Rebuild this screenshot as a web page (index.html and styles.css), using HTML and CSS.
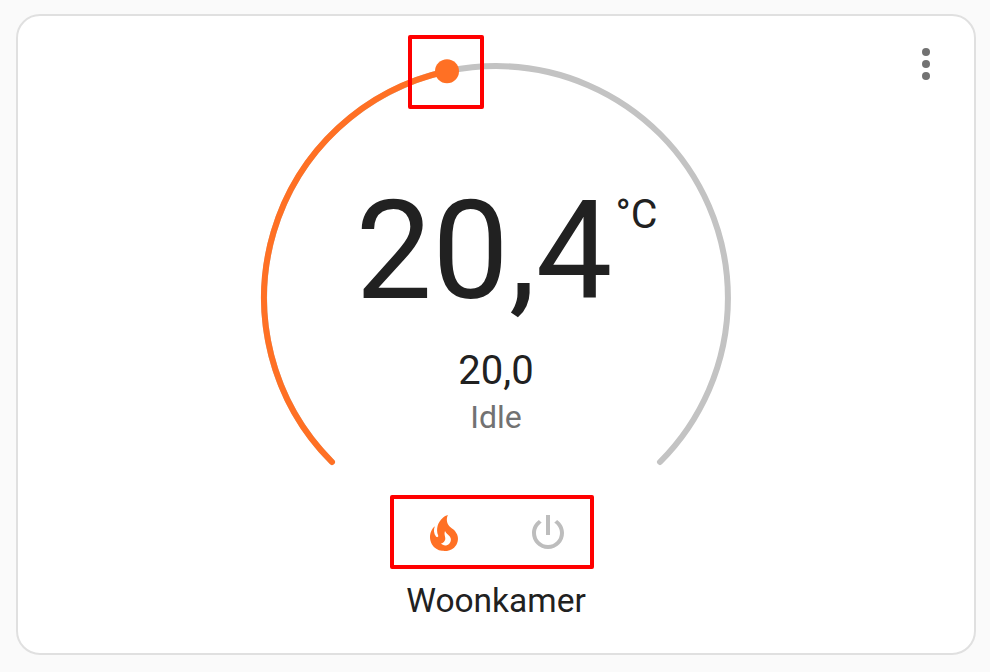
FILE: index.html
```html
<!DOCTYPE html>
<html lang="nl">
<head>
<meta charset="utf-8">
<title>Woonkamer</title>
<link rel="stylesheet" href="styles.css">
</head>
<body>
<main class="card">
  <button class="menu" aria-label="Menu">
    <svg class="icon" viewBox="0 0 24 24"><circle cx="12" cy="6" r="2"/><circle cx="12" cy="12" r="2"/><circle cx="12" cy="18" r="2"/></svg>
  </button>
  <section class="gauge">
    <svg class="dial" viewBox="-238 -238 476 412">
      <path class="track" d="M-164 164A232 232 0 1 1 164 164"/>
      <path class="value" d="M-164 164A232 232 0 0 1 -49 -226.8"/>
      <circle class="handle" cx="-49" cy="-226.8" r="12"/>
    </svg>
    <div class="readout">
      <div class="current"><span>20,4</span><span class="unit">°C</span></div>
      <div class="target">20,0</div>
      <div class="action">Idle</div>
    </div>
    <div class="mark mark-handle"></div>
  </section>
  <div class="modes">
    <svg class="icon heat" viewBox="0 0 24 24"><path d="M17.66 11.2C17.43 10.9 17.15 10.64 16.89 10.38C16.22 9.78 15.46 9.35 14.82 8.72C13.33 7.26 13 4.85 13.95 3C13 3.23 12.17 3.75 11.46 4.32C8.87 6.4 7.85 10.07 9.07 13.22C9.11 13.32 9.15 13.42 9.15 13.55C9.15 13.77 9 13.97 8.8 14.05C8.57 14.15 8.33 14.09 8.14 13.93C8.08 13.88 8.04 13.83 8 13.76C6.87 12.33 6.69 10.28 7.45 8.64C5.78 10 4.87 12.3 5 14.47C5.06 14.97 5.12 15.47 5.29 15.97C5.43 16.57 5.7 17.17 6 17.7C7.08 19.43 8.95 20.67 10.96 20.92C13.1 21.19 15.39 20.8 17.03 19.32C18.86 17.66 19.5 15 18.56 12.72L18.43 12.46C18.22 12 17.66 11.2 17.66 11.2M14.5 17.5C14.22 17.74 13.76 18 13.4 18.1C12.28 18.5 11.16 17.94 10.5 17.28C11.69 17 12.4 16.12 12.61 15.23C12.78 14.43 12.46 13.77 12.33 13C12.21 12.26 12.23 11.63 12.5 10.94C12.69 11.32 12.89 11.7 13.13 12C13.9 13 15.11 13.44 15.37 14.8C15.41 14.94 15.43 15.08 15.43 15.23C15.46 16.05 15.1 16.95 14.5 17.5Z"/></svg>
    <svg class="icon off" viewBox="0 0 24 24"><path d="M16.56 5.44L15.11 6.89C16.84 7.94 18 9.83 18 12A6 6 0 0 1 12 18A6 6 0 0 1 6 12C6 9.83 7.16 7.94 8.88 6.88L7.44 5.44C5.36 6.88 4 9.28 4 12A8 8 0 0 0 12 20A8 8 0 0 0 20 12C20 9.28 18.64 6.88 16.56 5.44M13 3H11V13H13"/></svg>
    <div class="mark mark-modes"></div>
  </div>
  <div class="name">Woonkamer</div>
</main>
</body>
</html>
```
FILE: styles.css
```css
* { box-sizing: border-box; }
body {
  margin: 0;
  padding: 14px 14px 17px 16px;
  height: 672px;
  background: #fafafa;
  color: #212121;
  font-family: Roboto, sans-serif;
}
.card {
  position: relative;
  display: flex;
  flex-direction: column;
  align-items: center;
  height: 641px;
  padding-top: 44px;
  border: 2px solid #e0e0e0;
  border-radius: 24px;
  background: #fff;
}
.icon { display: block; width: 48px; height: 48px; fill: currentColor; }
.menu {
  position: absolute;
  top: 24px;
  right: 24px;
  padding: 0;
  border: 0;
  background: none;
  color: #727272;
}
.gauge { position: relative; width: 476px; height: 412px; }
.dial { display: block; width: 476px; height: 412px; overflow: visible; fill: none; stroke-width: 6; stroke-linecap: round; }
.track { stroke: #c3c3c3; }
.value { stroke: #ff7024; }
.handle { fill: #ff7024; }
.readout {
  position: absolute;
  inset: 0;
  display: flex;
  flex-direction: column;
  align-items: center;
  padding-top: 111px;
}
.current { display: flex; align-items: flex-start; font-size: 136.4px; line-height: 160px; margin-left: 21px; }
.unit { margin-left: 3px; font-size: 41px; line-height: 48px; padding-top: 19px; }
.target { margin-top: 16px; font-size: 40px; line-height: 48px; }
.action { font-size: 32px; line-height: 44px; color: #727272; }
.mark { position: absolute; border: 4px solid #f00; border-radius: 2px; }
.mark-handle { left: 150px; top: -25px; width: 76px; height: 74px; }
.modes { position: relative; display: flex; gap: 56px; margin-top: 37px; }
.heat { color: #ff7024; }
.off { color: #bdbdbd; }
.mark-modes { left: -30px; top: -14px; width: 204px; height: 74px; }
.name { margin-top: 24px; font-size: 33.5px; line-height: 40px; }
```
